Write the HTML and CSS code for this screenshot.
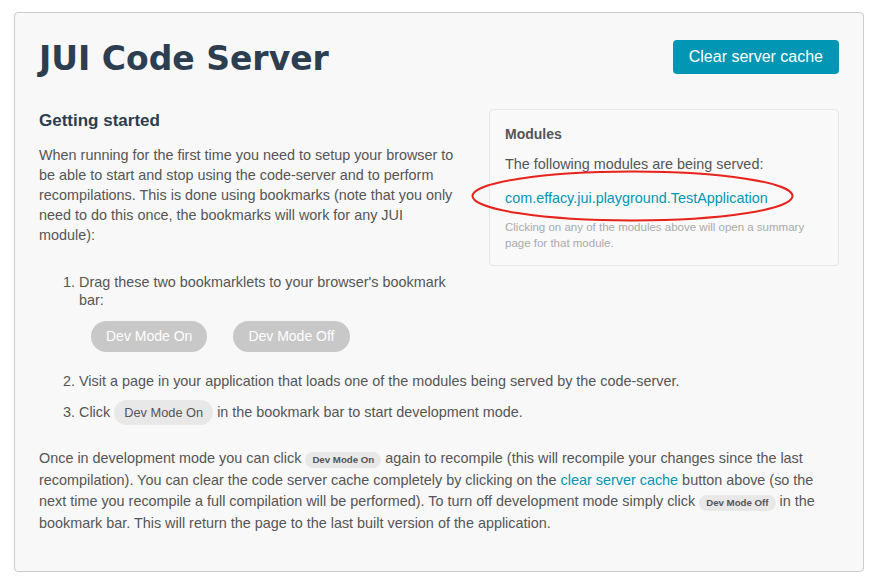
FILE: index.html
```html
<!DOCTYPE html>
<html>
<head>
<meta charset="utf-8">
<link rel="stylesheet" href="styles.css">
</head>
<body>
<div class="page">
  <header class="header">
    <h1 class="title">JUI Code Server</h1>
    <button class="btn-primary">Clear server cache</button>
  </header>
  <aside class="modules">
    <h3 class="modules-title">Modules</h3>
    <p class="modules-intro">The following modules are being served:</p>
    <a class="module-link" href="#">com.effacy.jui.playground.TestApplication</a>
    <p class="modules-note">Clicking on any of the modules above will open a summary page for that module.</p>
    <svg class="highlight" width="325" height="54" viewBox="0 0 325 54"><ellipse cx="162.5" cy="27" rx="160" ry="24.5" fill="none" stroke="#e8231c" stroke-width="2"/></svg>
  </aside>
  <h2 class="section-title">Getting started</h2>
  <p class="text">When running for the first time you need to setup your browser to be able to start and stop using the code-server and to perform recompilations. This is done using bookmarks (note that you only need to do this once, the bookmarks will work for any JUI module):</p>
  <ol class="steps">
    <li>Drag these two bookmarklets to your browser's bookmark bar:
      <div class="bookmarklets">
        <span class="bm">Dev Mode On</span>
        <span class="bm">Dev Mode Off</span>
      </div>
    </li>
    <li>Visit a page in your application that loads one of the modules being served by the code-server.</li>
    <li>Click <span class="pill">Dev Mode On</span> in the bookmark bar to start development mode.</li>
  </ol>
  <p class="text final">Once in development mode you can click <span class="pill-sm">Dev Mode On</span> again to recompile (this will recompile your changes since the last recompilation). You can clear the code server cache completely by clicking on the <a class="inline-link" href="#">clear server cache</a> button above (so the next time you recompile a full compilation will be performed). To turn off development mode simply click <span class="pill-sm">Dev Mode Off</span> in the bookmark bar. This will return the page to the last built version of the application.</p>
</div>
</body>
</html>
```
FILE: styles.css
```css
html, body {
  margin: 0;
  padding: 0;
  background: #ffffff;
}
body {
  font-family: "Liberation Sans", Arial, sans-serif;
  color: #555555;
  font-size: 14.4px;
}
.page {
  margin: 12px 11px 0 14px;
  height: 560px;
  box-sizing: border-box;
  background: #f8f8f8;
  border: 1px solid #cccccc;
  border-radius: 4px;
  padding: 26px 24px 24px 24px;
}
.header {
  display: flex;
  justify-content: space-between;
  align-items: flex-start;
  height: 70px;
}
.title {
  margin: 0;
  font-family: "DejaVu Sans", Verdana, sans-serif;
  font-weight: bold;
  font-size: 33px;
  line-height: 40px;
  color: #2c3e50;
}
.btn-primary {
  font-family: "Liberation Sans", Arial, sans-serif;
  font-size: 16px;
  color: #ffffff;
  background: #0096b4;
  border: none;
  border-radius: 4px;
  height: 34px;
  padding: 0 16px;
  margin-top: 1px;
}
.modules {
  float: right;
  position: relative;
  width: 350px;
  box-sizing: border-box;
  margin: 0 0 16px 30px;
  padding: 15px 15px 14px 15px;
  background: #f9f9f9;
  border: 1px solid #e6e6e6;
  border-radius: 4px;
}
.modules-title {
  margin: 0;
  font-size: 14px;
  font-weight: bold;
  line-height: 18px;
  color: #555555;
}
.modules-intro {
  margin: 12px 0 0 0;
  line-height: 18px;
}
.module-link {
  display: block;
  margin-top: 16px;
  line-height: 18px;
  color: #0096b4;
  text-decoration: none;
}
.modules-note {
  margin: 12px 0 0 0;
  font-size: 11.5px;
  line-height: 16px;
  color: #aaaaaa;
}
.highlight {
  position: absolute;
  left: -20px;
  top: 59px;
}
.section-title {
  margin: 0;
  padding-top: 1px;
  font-size: 17px;
  font-weight: bold;
  line-height: 22px;
  color: #2c3e50;
}
.text {
  margin: 13px 0 0 0;
  line-height: 20px;
}
.steps {
  margin: 28px 0 0 0;
  padding-left: 40px;
  line-height: 18px;
}
.steps li {
  margin-bottom: 10px;
}
.bookmarklets {
  display: flex;
  gap: 26px;
  margin: 12px 0 20px 12px;
}
.bm {
  display: inline-block;
  background: #c8c8c8;
  color: #ffffff;
  font-size: 14px;
  line-height: 17px;
  padding: 7px 15px;
  border-radius: 16px;
}
.pill {
  display: inline-block;
  background: #e8e8e8;
  color: #555555;
  font-size: 12.8px;
  line-height: 15px;
  padding: 5px 10px;
  border-radius: 13px;
}
.final {
  margin-top: 23px;
  line-height: 21.5px;
}
.pill-sm {
  display: inline-block;
  background: #e8e8e8;
  color: #555555;
  font-size: 9.7px;
  font-weight: bold;
  line-height: 12px;
  padding: 2px 7px;
  border-radius: 9px;
}
.inline-link {
  color: #0096b4;
  text-decoration: none;
}
```
